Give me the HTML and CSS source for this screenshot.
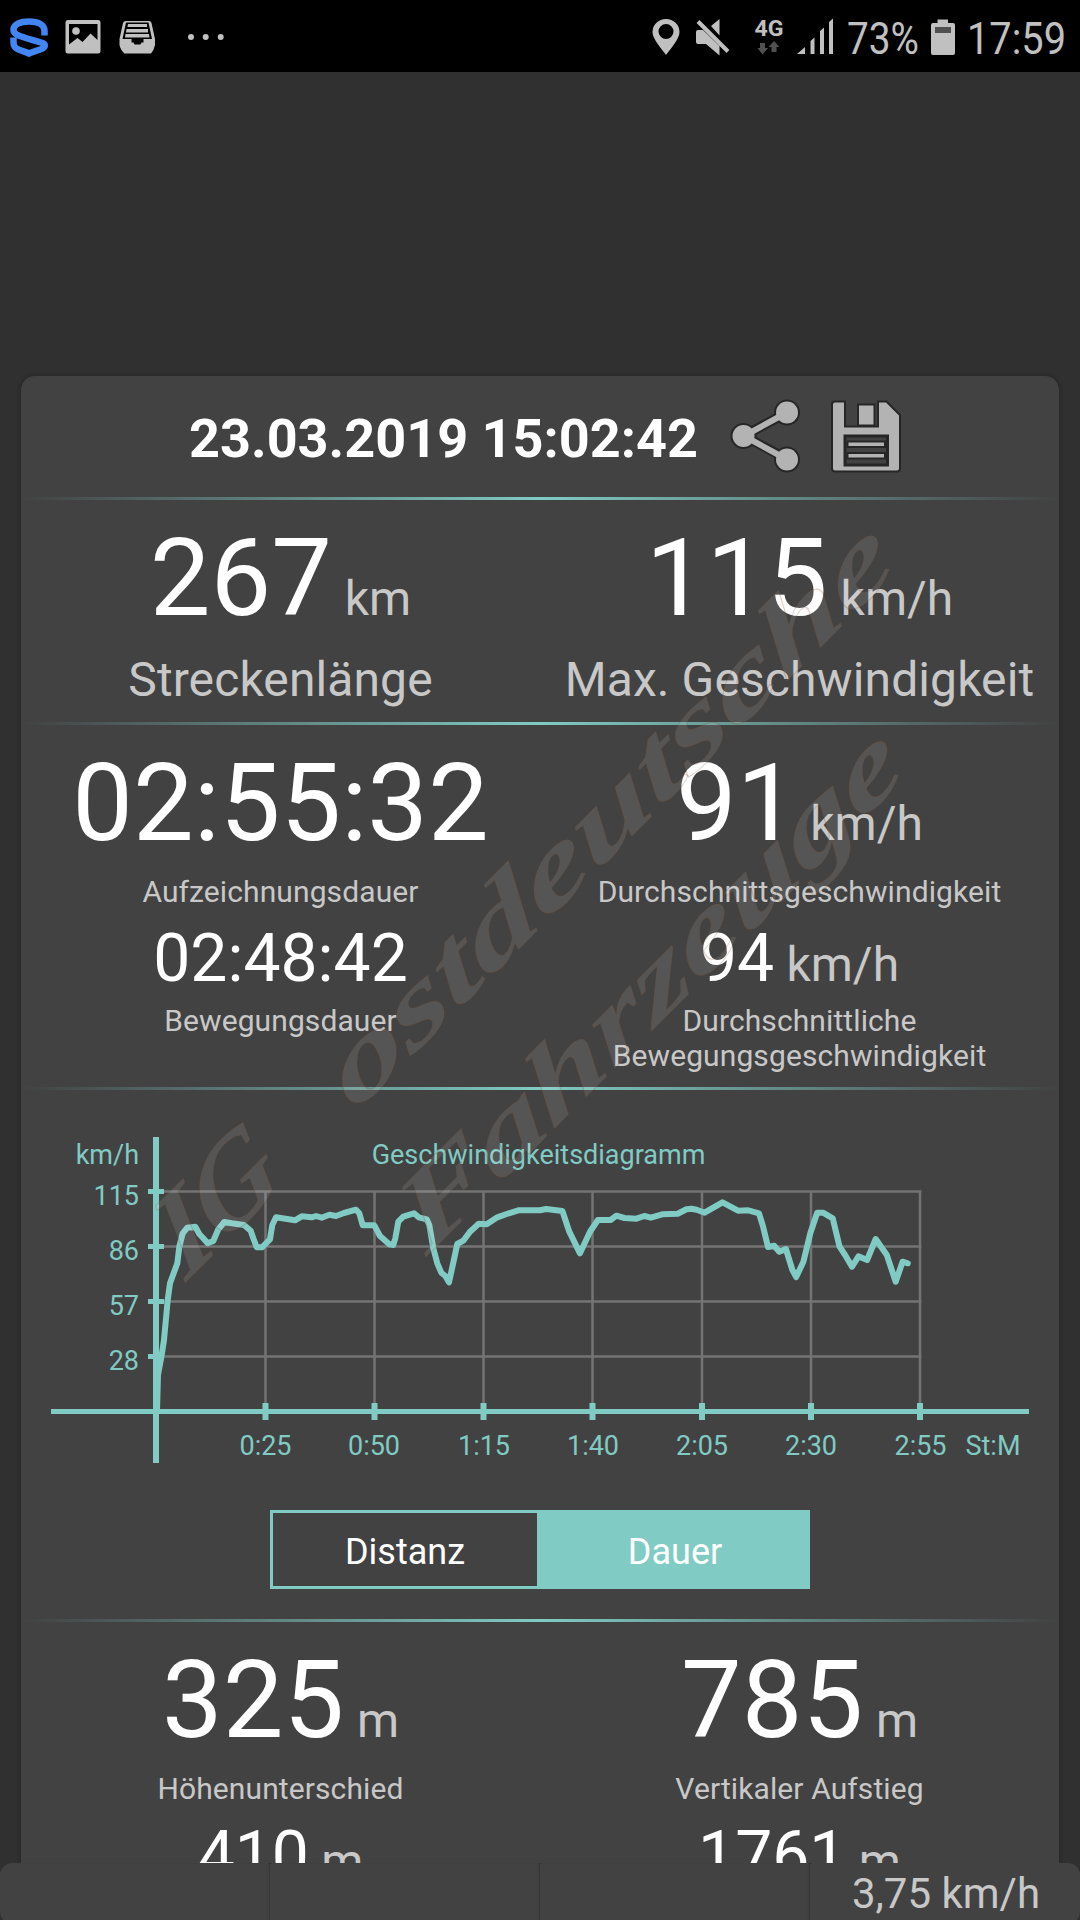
FILE: index.html
```html
<!DOCTYPE html>
<html lang="de">
<head>
  <meta charset="UTF-8" />
  <meta name="viewport" content="width=device-width, initial-scale=1" />
  <title>Streckendetails</title>
  <link rel="stylesheet" href="styles.css">
</head>
<body>
  <div class="statusbar">
    <svg class="status-left" width="240" height="72" viewBox="0 0 240 72">
      <path class="app-s" d="M44.500 35.500V31C44.500 24.500 38 21.500 29 21.500S13.500 24.500 13.500 29.500C13.500 34.500 18 35.500 29 39S44.800 42.500 44.800 45.500C44.500 50 35 50 29 53.500C22 50 13.500 50.500 13.500 42.500V37.500" />
      <path fill-rule="evenodd" d="M68 20h30q2.500 0 2.500 2.500v28.500q0 2.500-2.500 2.500H68q-2.500 0-2.500-2.500V22.500Q65.500 20 68 20zM69 24v20.500l8.500-6.500 5 4 8-8.500 7 6.500V24z" />
      <circle cx="76" cy="31" r="3.800" />
      <path fill-rule="evenodd" d="M126 21h23q2 0 2.500 2l3.500 16v6q-1 5-4 8.500H124.500q-4-3.500-5-8.500v-6l3.500-16q.5-2 3-2zM126 22.500l-3.500 16.500h9v3.500h2l1 2h6l1-2h2V39h8.500L148.500 22.500z" />
      <path d="M128 24h19v3h-19.500zM126.500 29h21.500v3.500h-22zM125.500 34h23.500l.5 3.500h-24.500z" />
      <circle cx="191" cy="37" r="3" />
      <circle cx="205.700" cy="37" r="3" />
      <circle cx="220.700" cy="37" r="3" />
    </svg>
    <svg class="status-right" width="440" height="72" viewBox="640 0 440 72">
      <path fill-rule="evenodd" d="M666 55C661 48 652.500 39 652.500 32A13.500 13 0 0 1 679.500 32C679.500 39 671 48 666 55zM666 24a7.500 7.500 0 1 0 0 15a7.500 7.500 0 1 0 0-15z" />
      <path d="M696 32q0-2 2-2h5l16.500 16v9.500L706 44h-8q-2 0-2-2zM711 26l8.500-7v16.500z" />
      <path class="slash" d="M698 21.500L728 51.500" />
      <text class="net" x="754.500" y="36" textLength="29" lengthAdjust="spacingAndGlyphs">4G</text>
      <path class="dim" d="M760 43h5v5h3l-5.500 6.500L757.500 48h2.500zM771.500 52v-5h-3l5.500-6 5.500 6h-3v5z" />
      <path d="M797 54l8-7v7zM810.500 41l4-3.500V54h-4zM820 31l4-3.500V54h-4zM829 22l4-3.500V54h-4z" />
      <text class="time" x="847" y="54" textLength="72" lengthAdjust="spacingAndGlyphs">73%</text>
      <path d="M933 23h4.500v-3.500h10.500V23h5q2 0 2 2v28q0 2-2 2H933q-2 0-2-2V25q0-2 2-2z" />
      <path class="dim" d="M935 27h16v6h-16z" />
      <text class="time" x="967" y="54" textLength="99" lengthAdjust="spacingAndGlyphs">17:59</text>
    </svg>
  </div>

  <main class="card">
    <header class="card-header">
      <h1>23.03.2019 15:02:42</h1>
      <svg class="icon" width="74" height="80" viewBox="0 0 74 80">
        <g class="icon-outline">
          <path class="link" d="M57 16.500L14 40L57 63" />
          <circle cx="57" cy="16.500" r="11" />
          <circle cx="13.500" cy="40" r="11" />
          <circle cx="57" cy="63.500" r="11" />
        </g>
        <path class="link-fill" d="M57 16.500L14 40L57 63.500" />
        <circle cx="57" cy="16.500" r="11" />
        <circle cx="13.500" cy="40" r="11" />
        <circle cx="57" cy="63.500" r="11" />
      </svg>
      <svg class="icon save" width="74" height="80" viewBox="0 0 74 80">
        <path class="edge" d="M5 6.500h9v25h35v-25H56l13 13v53q0 2-2 2H5q-2 0-2-2v-64q0-2 2-2z" />
        <path class="edge" d="M29 9.500h14.500v19H29z" />
        <path class="slot" d="M15 40h42.500v29H15z" />
        <path class="edge" d="M18.500 46.500h35.500v3.500H18.500zM18.500 58h35.500v3.500H18.500z" />
      </svg>
    </header>

    <hr>

    <section class="stats">
      <div class="stat">
        <div class="value">267 <span>km</span></div>
        <div class="label large">Streckenlänge</div>
      </div>
      <div class="stat">
        <div class="value">115 <span>km/h</span></div>
        <div class="label large">Max. Geschwindigkeit</div>
      </div>
    </section>

    <hr>

    <section class="stats times">
      <div class="stat">
        <div class="value">02:55:32</div>
        <div class="label">Aufzeichnungsdauer</div>
        <div class="value small">02:48:42</div>
        <div class="label">Bewegungsdauer</div>
      </div>
      <div class="stat">
        <div class="value">91 <span>km/h</span></div>
        <div class="label">Durchschnittsgeschwindigkeit</div>
        <div class="value small">94 <span>km/h</span></div>
        <div class="label">Durchschnittliche<br>Bewegungsgeschwindigkeit</div>
      </div>
    </section>

    <hr>

    <section class="diagram">
      <svg class="chart" width="1038" height="420" viewBox="0 0 1038 420">
        <path class="grid" d="M135 101.500H900.500M135 156.500H900.500M135 211.500H900.500M135 266.500H900.500M244.500 101.500V321M353.500 101.500V321M462.500 101.500V321M571.500 101.500V321M681 101.500V321M790 101.500V321M899 101.500V321" />
        <path class="axis" d="M30 321.500H1008M127 101.500h16M127 156.500h16M127 211.500h16M127 266.500h16" />
        <path class="axis-v" d="M135 47V373M244.500 313v17M353.500 313v17M462.500 313v17M571.500 313v17M681 313v17M790 313v17M899 313v17" />
        <polyline class="curve" points="136,321 137,285 140.7,265 143,250 146.7,210 149,193.3 156.3,173.3 158.3,156.7 161.7,143.3 166.3,137.7 174.3,136.7 178.3,144 182.3,148.3 186.7,153.3 192.3,151 197.3,139.3 203.3,132 210.7,133.3 223,135 229.7,140.7 232.3,148.3 235.7,157.3 241,157.3 249,149.3 251.3,135 255,127.3 274,130.3 280.7,126.3 290.7,127.3 295,126 300.7,127.7 308.3,124.7 315,126 323,123 335,119.7 338.3,123.3 341.7,135.3 353.3,135.3 359,146 368.3,154.3 372.3,155 374.3,148.3 377.3,131.7 382.3,126.7 393,123.3 397.7,127.3 405.7,129.3 408.3,135 412.3,158.3 416.3,173.3 420.3,182.7 424.3,186 428,192.3 430.7,180 436.3,154 442.3,150.7 449,141.7 457.7,133.7 465.7,134.3 476.3,127.3 485.7,124 497.3,120.3 519,120.3 525.2,119 541.4,121 548.3,141.7 559,163.3 569,141.7 576.9,130 589.6,130 595.4,125.7 603.4,128 615.4,128.7 623.3,126 629.9,127.7 641.2,124.3 656.7,123.7 665.4,119.3 670.5,118.7 675.7,119.7 683.6,122.7 701.5,112.3 717,120.7 727.3,120.3 738,123.3 742.1,136.7 747,157 753.2,155.7 758.3,161.7 764.9,159 771.4,180 775.2,187 782.4,171.7 789.3,143.3 796.2,122.7 802,122.7 811.7,128.3 818.6,156.7 824.1,165 831,176.7 837.5,166.3 846.1,170 854.7,149 865.8,165 874.7,191.7 881.6,171.7 886.8,173.3" />
        <g class="end">
          <text x="118" y="74">km/h</text>
          <text x="118" y="115">115</text>
          <text x="118" y="170">86</text>
          <text x="118" y="225">57</text>
          <text x="118" y="280">28</text>
        </g>
        <g class="middle">
          <text x="517.500" y="74">Geschwindigkeitsdiagramm</text>
          <text x="244.500" y="365">0:25</text>
          <text x="353" y="365">0:50</text>
          <text x="463" y="365">1:15</text>
          <text x="572" y="365">1:40</text>
          <text x="681" y="365">2:05</text>
          <text x="790" y="365">2:30</text>
          <text x="899.500" y="365">2:55</text>
          <text x="972" y="365">St:M</text>
        </g>
      </svg>
      <div class="toggle">
        <button>Distanz</button>
        <button class="active">Dauer</button>
      </div>
    </section>

    <hr>

    <section class="stats">
      <div class="stat">
        <div class="value">325 <span>m</span></div>
        <div class="label">Höhenunterschied</div>
        <div class="value small">410 <span>m</span></div>
      </div>
      <div class="stat">
        <div class="value">785 <span>m</span></div>
        <div class="label">Vertikaler Aufstieg</div>
        <div class="value small">1761 <span>m</span></div>
      </div>
    </section>
  </main>

  <footer class="bottombar">
    <div></div>
    <div></div>
    <div></div>
    <div>3,75 km/h</div>
  </footer>

  <svg class="watermark" width="1080" height="1920" viewBox="0 0 1080 1920">
    <g transform="rotate(-45)">
      <text transform="translate(-775 1038) skewX(-14)" textLength="140" lengthAdjust="spacingAndGlyphs">IG</text>
      <text transform="translate(-537 1038) skewX(-14) scale(1 0.88)" textLength="770" lengthAdjust="spacingAndGlyphs">ostdeutsche</text>
      <text transform="translate(-588 1190) skewX(-14) scale(1 0.88)" textLength="682" lengthAdjust="spacingAndGlyphs">Fahrzeuge</text>
    </g>
  </svg>
</body>
</html>
```
FILE: styles.css
```css
* {
  box-sizing: border-box;
}
body {
  margin: 0;
  height: 1920px;
  display: flex;
  flex-direction: column;
  position: relative;
  overflow: hidden;
  background-color: #303030;
  color: #fff;
  font-family: Roboto, "Liberation Sans", sans-serif;
}
svg {
  display: block;
}

/* status bar */
.statusbar {
  flex: none;
  height: 72px;
  display: flex;
  justify-content: space-between;
  background-color: #000;
}
.statusbar svg {
  fill: #c0c0c0;
}
.statusbar .app-s {
  fill: none;
  stroke: #4285f4;
  stroke-width: 6.5;
}
.statusbar .slash {
  stroke: #c0c0c0;
  stroke-width: 4;
}
.statusbar .dim {
  fill: #505050;
}
.net {
  font-size: 22px;
  font-weight: bold;
}
.time {
  font-size: 45px;
}

/* track card */
.card {
  flex: 1;
  min-height: 0;
  margin: 304px 21px 0;
  overflow: hidden;
  background-color: #424242;
  border-radius: 14px 14px 0 0;
  box-shadow: 0 0 5px rgba(0, 0, 0, 0.3);
}
.card-header {
  height: 121px;
  display: flex;
  align-items: center;
  padding-left: 168px;
}
h1 {
  margin: 4px 32px 0 0;
  font-size: 54px;
  font-weight: bold;
  line-height: 63px;
  white-space: nowrap;
}
.icon {
  margin-bottom: 2px;
  fill: #b3b3b3;
}
.save {
  margin-left: 26px;
}
.icon-outline {
  fill: none;
  stroke: #262626;
  stroke-width: 4;
}
.link {
  stroke-width: 10;
}
.link-fill {
  fill: none;
  stroke: #b3b3b3;
  stroke-width: 6;
}
.edge {
  stroke: #262626;
  stroke-width: 4;
  paint-order: stroke;
}
.slot {
  fill: #424242;
  stroke: #262626;
  stroke-width: 3;
}
hr {
  height: 3px;
  margin: 0;
  border: none;
  background: linear-gradient(to right, transparent, #80cbc4, transparent);
}

.stats {
  display: grid;
  grid-template-columns: 1fr 1fr;
  height: 222px;
  padding-top: 15px;
  text-align: center;
  white-space: nowrap;
}
.times {
  height: 362px;
}
.value {
  font-size: 108px;
  line-height: 126px;
}
.value span {
  font-size: 48px;
  line-height: 1;
  color: #c8c8c8;
  margin-left: -14px;
}
.value.small {
  margin-top: 11px;
  font-size: 66px;
  line-height: 77px;
}
.value.small span {
  margin-left: -4px;
}
.label {
  margin-top: 8px;
  font-size: 30px;
  line-height: 35px;
  letter-spacing: 0.1px;
  color: #c8c8c8;
}
.value.small + .label {
  margin-top: 6px;
}
.label.large {
  margin-top: 11px;
  font-size: 48px;
  line-height: 56px;
}

/* speed chart */
.diagram {
  height: 529px;
}
.chart {
  font-size: 27px;
  fill: #80cbc4;
}
.grid {
  fill: none;
  stroke: #747474;
  stroke-width: 2.5;
}
.axis {
  stroke: #80cbc4;
  stroke-width: 5;
}
.axis-v {
  stroke: #80cbc4;
  stroke-width: 6;
}
.curve {
  fill: none;
  stroke: #80cbc4;
  stroke-width: 6;
  stroke-linejoin: round;
  stroke-linecap: round;
}
.end {
  text-anchor: end;
}
.middle {
  text-anchor: middle;
}
.toggle {
  display: flex;
  width: 540px;
  height: 79px;
  margin: 0 auto;
}
.toggle button {
  flex: 1;
  padding: 4px 0 0;
  border: 3px solid #80cbc4;
  background: none;
  color: #fff;
  font-family: inherit;
  font-size: 36px;
}
.toggle .active {
  background-color: #80cbc4;
}

/* bottom info bar */
.bottombar {
  flex: none;
  height: 57px;
  display: grid;
  grid-template-columns: repeat(4, 1fr);
  position: relative;
}
.bottombar div {
  padding-left: 2px;
  border-radius: 2px;
  background-color: #424242;
  box-shadow: inset -2px 0 2px -1px #363636;
  color: #c8c8c8;
  font-size: 42px;
  line-height: 61px;
  text-align: center;
}
.bottombar div:first-child {
  border-radius: 12px 2px 2px 12px;
}
.bottombar div:last-child {
  border-radius: 2px 12px 12px 2px;
  box-shadow: none;
}

.watermark {
  position: absolute;
  top: 0;
  left: 0;
  pointer-events: none;
  fill: rgba(255, 250, 245, 0.11);
  stroke: rgba(120, 80, 50, 0.25);
  stroke-width: 1;
  font-family: "Liberation Serif", serif;
  font-size: 115px;
  font-style: italic;
  font-weight: bold;
}
```
